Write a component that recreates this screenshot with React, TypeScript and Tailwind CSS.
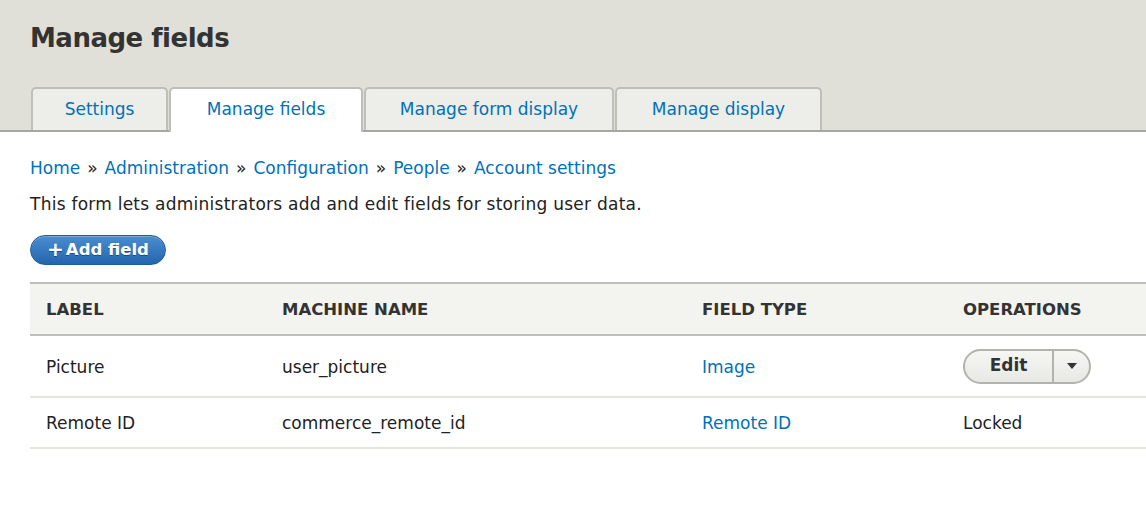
import React from 'react';

const font = { fontFamily: '"DejaVu Sans", "Liberation Sans", sans-serif' };

const tabs = [
  { label: 'Settings', width: 'w-[137px]', active: false },
  { label: 'Manage fields', width: 'w-[194px]', active: true },
  { label: 'Manage form display', width: 'w-[250px]', active: false },
  { label: 'Manage display', width: 'w-[207px]', active: false },
];

const crumbs = ['Home', 'Administration', 'Configuration', 'People', 'Account settings'];

const rows = [
  { label: 'Picture', machine: 'user_picture', type: 'Image', op: 'edit' },
  { label: 'Remote ID', machine: 'commerce_remote_id', type: 'Remote ID', op: 'locked' },
];

const App: React.FC = () => {
  return (
    <div className="min-h-[512px] w-[1146px] bg-white text-[#222]" style={font}>
      {/* Header */}
      <div className="bg-[#e0e0d8] border-b-2 border-[#a6a6a6] px-[30px] pt-[20px]">
        <h1 className="text-[26px] font-bold text-[#333] leading-[36px] tracking-[-0.5px]">Manage fields</h1>
        <div className="flex gap-[1px] pl-[1px] mt-[31px] -mb-[2px]">
          {tabs.map(tab => (
            <div
              key={tab.label}
              className={`${tab.width} flex items-center justify-center rounded-t-[5px] border-2 border-b-0 border-[#bfbfba] text-[17px] text-[#0071b8] ${
                tab.active ? 'bg-white h-[45px] pb-[1px]' : 'bg-[#ededea] h-[43px] pt-[1px] self-start'
              }`}
            >
              {tab.label}
            </div>
          ))}
        </div>
      </div>

      {/* Content */}
      <div className="pl-[30px] pt-[24px]">
        <div className="text-[17px] leading-[24px] text-[#0071b8] flex items-center gap-[7px]">
          {crumbs.map((c, i) => (
            <React.Fragment key={c}>
              {i > 0 && <span className="text-[#222]">»</span>}
              <span>{c}</span>
            </React.Fragment>
          ))}
        </div>
        <p className="text-[17px] leading-[24px] mt-[12px] tracking-[0.25px]">
          This form lets administrators add and edit fields for storing user data.
        </p>
        <button
          className="mt-[19px] w-[136px] h-[30px] rounded-full border border-[#1e5c9c] bg-gradient-to-b from-[#4c8dd1] to-[#2266ad] text-white text-[16.5px] font-bold flex items-center justify-center gap-[2px] shadow-[inset_0_1px_0_rgba(255,255,255,0.25)] [text-shadow:0_1px_0_rgba(0,0,0,0.35)]"
        >
          <span className="text-[20px] leading-none -mt-[2px]">+</span>
          <span>Add field</span>
        </button>

        {/* Table */}
        <table className="w-full mt-[17px] border-collapse text-[17px]">
          <thead>
            <tr className="bg-[#f3f3f0] border-t-2 border-b-2 border-[#bfbfba]">
              <th className="w-[252px] h-[52px] pt-[3px] text-left pl-[16px] font-bold uppercase text-[16.5px] text-[#333]">Label</th>
              <th className="w-[420px] pt-[3px] text-left font-bold uppercase text-[16.5px] text-[#333]">Machine name</th>
              <th className="w-[261px] pt-[3px] text-left font-bold uppercase text-[16.5px] text-[#333]">Field type</th>
              <th className="pt-[3px] text-left font-bold uppercase text-[16.5px] text-[#333]">Operations</th>
            </tr>
          </thead>
          <tbody>
            {rows.map(row => (
              <tr key={row.machine} className="border-b-2 border-[#e6e4df]">
                <td className={`pl-[16px] pt-[3px] ${row.op === 'edit' ? 'h-[62px]' : 'h-[51px]'}`}>{row.label}</td>
                <td className="pt-[3px]">{row.machine}</td>
                <td className="pt-[3px] text-[#0071b8]">{row.type}</td>
                <td>
                  {row.op === 'edit' ? (
                    <div className="inline-flex align-middle w-[128px] h-[35px] rounded-full border-2 border-[#b3b3ad] bg-gradient-to-b from-[#f6f6f3] to-[#e8e8e3] overflow-hidden">
                      <span className="flex-1 flex items-center justify-center font-bold text-[17px] text-[#333] border-r-2 border-[#b3b3ad]">
                        Edit
                      </span>
                      <span className="w-[35px] flex items-center justify-center">
                        <svg width="10" height="6" viewBox="0 0 10 6">
                          <path d="M0 0 L10 0 L5 6 Z" fill="#333" />
                        </svg>
                      </span>
                    </div>
                  ) : (
                    <span className="inline-block pt-[3px]">Locked</span>
                  )}
                </td>
              </tr>
            ))}
          </tbody>
        </table>
      </div>
    </div>
  );
};

export default App;
